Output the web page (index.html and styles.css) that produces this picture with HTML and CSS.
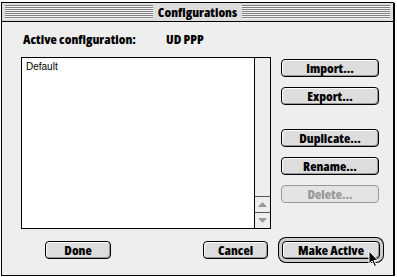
FILE: index.html
```html
<!DOCTYPE html>
<html>
	<head>
		<title>Configurations</title>
		<link rel="stylesheet" href="styles.css">
	</head>
	<body>
		<div class="window">
			<div class="titlebar">
				<div class="stripes"><span class="title">Configurations</span></div>
			</div>

			<div class="active-row">
				<span class="label">Active configuration:</span>
				<span class="value">UD PPP</span>
			</div>

			<div class="main">
				<div class="list">
					<div class="items">
						<div class="item">Default</div>
					</div>
					<div class="scrollbar">
						<div class="track"></div>
						<div class="arrow">
							<svg width="9" height="5" viewBox="0 0 9 5"><polygon points="4.5,0 9,5 0,5" fill="#999"/></svg>
						</div>
						<div class="arrow">
							<svg width="9" height="5" viewBox="0 0 9 5"><polygon points="0,0 9,0 4.5,5" fill="#999"/></svg>
						</div>
					</div>
				</div>

				<div class="side">
					<div class="group">
						<button class="btn">Import...</button>
						<button class="btn">Export...</button>
					</div>
					<div class="group">
						<button class="btn">Duplicate...</button>
						<button class="btn">Rename...</button>
						<button class="btn" disabled>Delete...</button>
					</div>
				</div>
			</div>

			<div class="footer">
				<button class="btn done">Done</button>
				<button class="btn cancel">Cancel</button>
				<button class="btn make-active">Make Active</button>
			</div>

			<svg class="cursor" width="12" height="18" viewBox="0 0 12 18">
				<path d="M1 1 L1 14 L4 11 L6.5 16.5 L8.5 15.5 L6 10.5 L10 10.5 Z" fill="#000" stroke="#fff" stroke-width="1"/>
			</svg>
		</div>
	</body>
</html>
```

FILE: styles.css
```css
body {
	margin: 0;
	background-color: #ffffff;
	font-family: "Open Sans", "DejaVu Sans Condensed", sans-serif;
	font-stretch: 75%;
	font-weight: 800;
	font-size: 13px;
	color: #000000;
}

.window {
	position: relative;
	box-sizing: border-box;
	margin-left: 1px;
	margin-top: 2px;
	width: 393px;
	height: 274px;
	border: 1px solid #000000;
	box-shadow: 1px 1px 0 #000000;
	background-color: #eeeeee;
}

.titlebar {
	border-bottom: 1px solid #000000;
	background-color: #dddddd;
	padding: 2px 3px 1px 3px;
	box-sizing: border-box;
	height: 19px;
}

.stripes {
	height: 14px;
	display: flex;
	justify-content: center;
	align-items: center;
	background: repeating-linear-gradient(to bottom, #808080 0 1px, #f4f4f4 1px 2px);
}

.title {
	background-color: #dddddd;
	padding: 0 5px;
	line-height: 16px;
	font-size: 13px;
}

.active-row {
	display: flex;
	margin-top: 10px;
	padding-left: 21px;
	line-height: 14px;
}

.label {
	width: 143px;
}

.main {
	display: flex;
	gap: 10px;
	margin-top: 11px;
	padding-left: 19px;
}

.list {
	box-sizing: border-box;
	width: 250px;
	height: 172px;
	border: 1px solid #000000;
	background-color: #ffffff;
	display: flex;
}

.items {
	flex: 1;
	padding: 3px 4px;
}

.item {
	font-family: "Liberation Sans", sans-serif;
	font-stretch: normal;
	font-weight: normal;
	font-size: 10px;
	line-height: 12px;
}

.scrollbar {
	width: 15px;
	border-left: 1px solid #000000;
	background-color: #eeeeee;
	display: flex;
	flex-direction: column;
}

.track {
	flex: 1;
}

.arrow {
	height: 15px;
	border-top: 1px solid #555555;
	display: flex;
	justify-content: center;
	align-items: center;
}

.side {
	display: flex;
	flex-direction: column;
	gap: 24px;
	padding-top: 2px;
}

.group {
	display: flex;
	flex-direction: column;
	gap: 10px;
}

.btn {
	box-sizing: border-box;
	width: 98px;
	height: 18px;
	padding: 0;
	border: 1px solid #000000;
	border-radius: 4px;
	background-color: #dddddd;
	box-shadow: inset 1px 1px 0 #ffffff, inset -1px -1px 0 #999999;
	font-family: "Open Sans", "DejaVu Sans Condensed", sans-serif;
	font-stretch: 75%;
	font-weight: 800;
	font-size: 13px;
	line-height: 16px;
	color: #000000;
}

.btn:disabled {
	border-color: #999999;
	color: #999999;
	box-shadow: none;
	background-color: #e4e4e4;
}

.footer {
	display: flex;
	margin-top: 12px;
	padding-left: 43px;
}

.done {
	width: 66px;
}

.cancel {
	width: 65px;
	margin-left: 92px;
}

.make-active {
	margin-left: 14px;
	box-shadow: inset 1px 1px 0 #ffffff, inset -1px -1px 0 #999999, 0 0 0 3px #cccccc, 0 0 0 4px #000000;
}

.cursor {
	position: absolute;
	left: 366px;
	top: 247px;
}
```
